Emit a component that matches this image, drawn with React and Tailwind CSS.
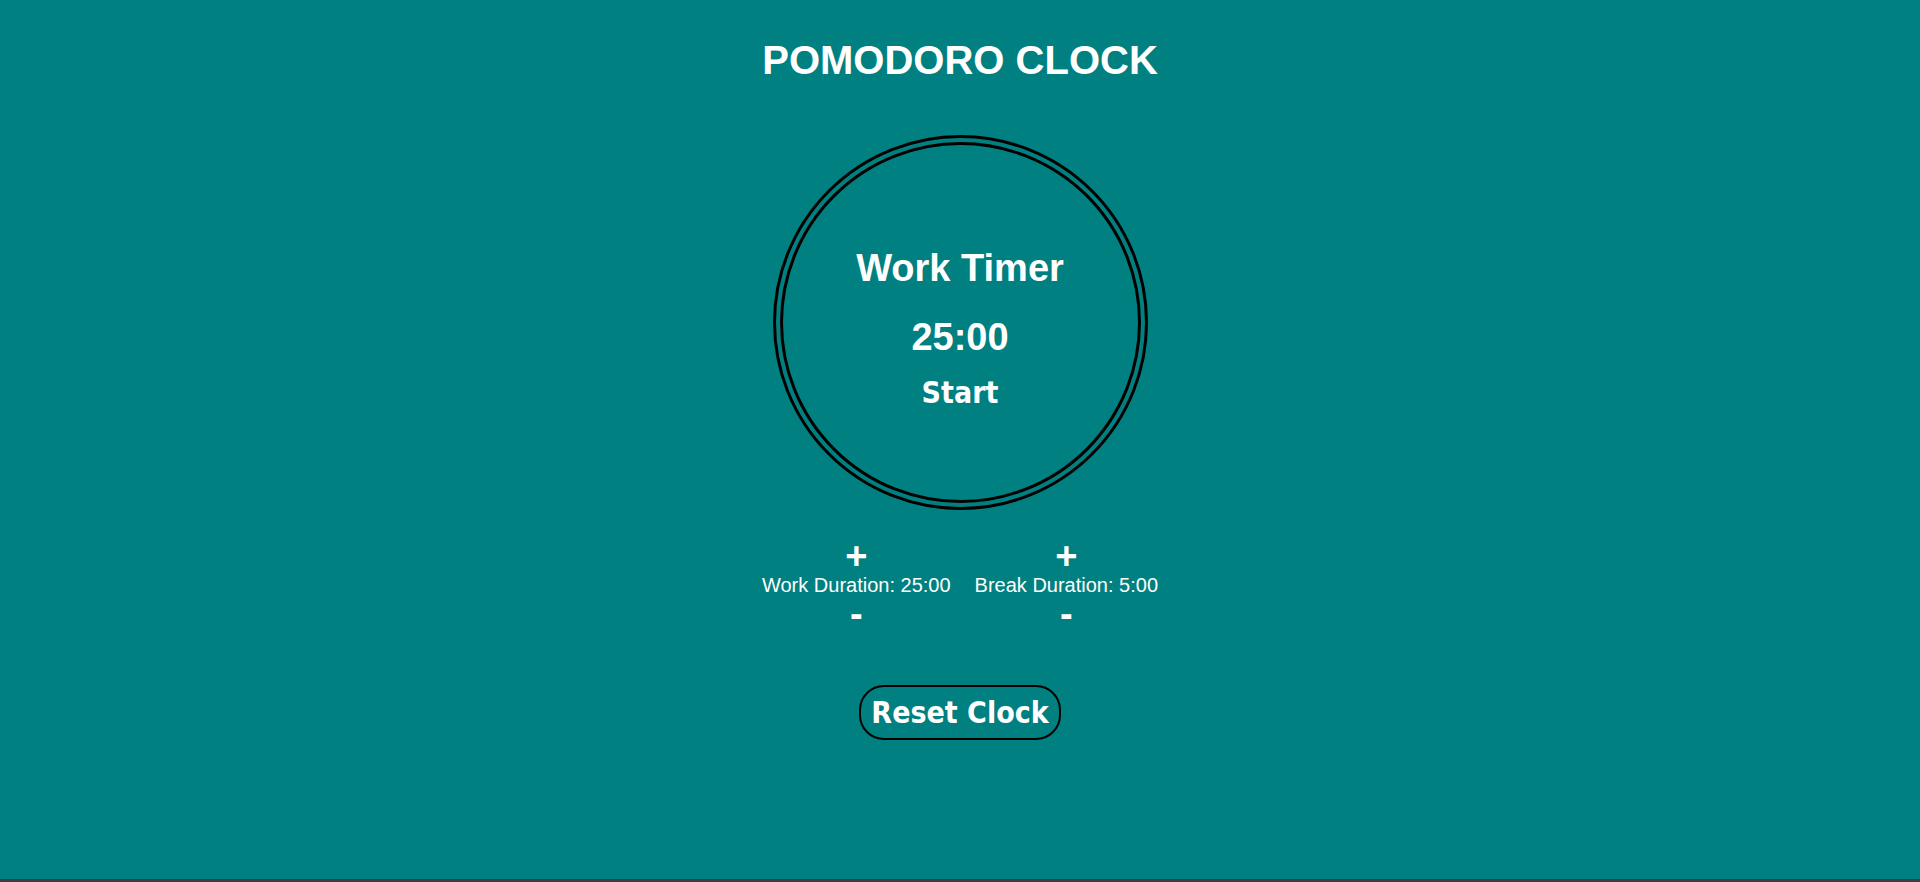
export default function App() {
  return (
    <div className="flex min-h-screen flex-col border-b-3 border-[#403c42] bg-[#008080] font-['Liberation_Sans',Arial,sans-serif] text-white">
      <main className="flex flex-1 flex-col items-center pt-[37px]">
        <h1 className="text-[40px] leading-[46px] font-bold">POMODORO CLOCK</h1>
        <section className="mt-[52px] flex size-[375px] flex-col items-center rounded-full border-10 border-double border-black pt-[101px]">
          <h2 className="text-[38px] leading-[44px] font-bold">Work Timer</h2>
          <p className="mt-[25px] text-[38px] leading-[44px] font-bold">25:00</p>
          <button type="button" className="mt-3 font-['DejaVu_Sans_Condensed','DejaVu_Sans',sans-serif] text-[30px] leading-[43px] font-bold">Start</button>
        </section>
        <section className="mt-[29px] flex gap-6 text-xl leading-6">
          <div className="flex flex-col items-center">
            <button type="button" aria-label="Increase work duration" className="px-2 text-[38px] leading-[34px] font-bold">+</button>
            <p>Work Duration: 25:00</p>
            <button type="button" aria-label="Decrease work duration" className="px-2 text-[38px] leading-[34px] font-bold">-</button>
          </div>
          <div className="flex flex-col items-center">
            <button type="button" aria-label="Increase break duration" className="px-2 text-[38px] leading-[34px] font-bold">+</button>
            <p>Break Duration: 5:00</p>
            <button type="button" aria-label="Decrease break duration" className="px-2 text-[38px] leading-[34px] font-bold">-</button>
          </div>
        </section>
        <button type="button" className="mt-[54px] rounded-[25px] border-2 border-black px-2.5 py-1 font-['DejaVu_Sans_Condensed','DejaVu_Sans',sans-serif] text-[30px] leading-[43px] font-bold">Reset Clock</button>
      </main>
    </div>
  );
}
